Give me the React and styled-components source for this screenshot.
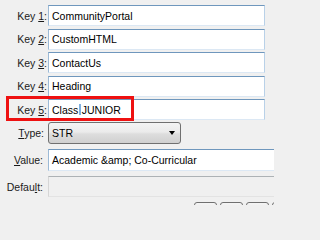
import styled, { createGlobalStyle } from 'styled-components';

const GlobalStyle = createGlobalStyle`
    html, body {
        margin: 0;
        padding: 0;
        background: #f0f0f0;
        overflow: hidden;
    }
    body {
        font-family: 'Liberation Sans', Tahoma, Arial, sans-serif;
        font-size: 10.5px;
        color: #1a1a1a;
    }
`

const keys = ['CommunityPortal', 'CustomHTML', 'ContactUs', 'Heading'];

function App() {
    return (
        <>
        <GlobalStyle />
        <Panel>
            <Form>
                {keys.map((value, i) => (
                    <Row key={value} $gap={i === 0 ? 0 : 2.5}>
                        <Label $pad={1}>Key <u>{i + 1}</u>:</Label>
                        <TextBox>{value}</TextBox>
                    </Row>
                ))}
                <Row $gap={2.5}>
                    <Label $pad={1}>Key <u>5</u>:</Label>
                    <TextBox>Class<Caret />JUNIOR</TextBox>
                    <Highlight />
                </Row>
                <Row $gap={2}>
                    <Label $pad={4}><u>T</u>ype:</Label>
                    <Select>
                        <span>STR</span>
                        <Arrow />
                    </Select>
                </Row>
                <Row $gap={5}>
                    <Label $pad={5}><u>V</u>alue:</Label>
                    <TextBox $wide $tall>Academic &amp;amp; Co-Curricular</TextBox>
                </Row>
                <Row $gap={5}>
                    <Label $pad={5}>Defau<u>l</u>t:</Label>
                    <TextBox $wide $disabled />
                </Row>
            </Form>
            <Buttons>
                <SmallButton />
                <SmallButton />
                <SmallButton />
                <SmallButton />
            </Buttons>
        </Panel>
        </>
    );
}

export default App;

const Panel = styled.div`
    width: 274px;
    height: 205px;
    padding-top: 5px;
    box-sizing: border-box;
    overflow: hidden;
`

const Form = styled.div`
    display: flex;
    flex-direction: column;
`

const Row = styled.div`
    position: relative;
    display: flex;
    align-items: center;
    margin-top: ${(p) => p.$gap}px;
`

const Label = styled.label`
    width: 48px;
    flex-shrink: 0;
    box-sizing: border-box;
    padding-right: ${(p) => p.$pad}px;
    text-align: right;
    white-space: nowrap;
    u {
        text-decoration-thickness: 1px;
        text-underline-offset: 1px;
    }
`

const TextBox = styled.div`
    width: ${(p) => (p.$wide ? '240px' : '217px')};
    height: ${(p) => (p.$tall ? '22px' : '21px')};
    flex-shrink: 0;
    box-sizing: border-box;
    display: flex;
    align-items: center;
    padding-left: 3px;
    background: ${(p) => (p.$disabled ? '#f0f0f0' : '#ffffff')};
    border: 1px solid;
    border-color: ${(p) => (p.$disabled
        ? '#adb2b5 #dadada #e3e3e3 #d6d6d6'
        : '#6f97bd #b9d1e8 #dce8f4 #9cbad6')};
    color: #000;
    white-space: nowrap;
`

const Caret = styled.span`
    display: inline-block;
    width: 1.5px;
    height: 11px;
    margin: 0 1px 0 1px;
    background: #7fb0e0;
`

const Highlight = styled.div`
    position: absolute;
    left: 6px;
    top: -3px;
    width: 128px;
    height: 25px;
    box-sizing: border-box;
    border: 3px solid #ee1111;
    pointer-events: none;
`

const Select = styled.div`
    width: 133px;
    height: 22px;
    box-sizing: border-box;
    display: flex;
    align-items: center;
    justify-content: space-between;
    padding: 0 5px 0 3px;
    border: 1px solid #707070;
    border-radius: 3px;
    background: linear-gradient(#f4f4f4 0%, #ebebeb 45%, #dddddd 55%, #d0d0d0 100%);
    color: #000;
`

const Arrow = styled.span`
    width: 0;
    height: 0;
    border-left: 3.5px solid transparent;
    border-right: 3.5px solid transparent;
    border-top: 4px solid #000;
`

const Buttons = styled.div`
    display: flex;
    gap: 3px;
    margin-top: 5px;
    padding-left: 194px;
`

const SmallButton = styled.div`
    width: 23px;
    height: 22px;
    flex-shrink: 0;
    box-sizing: border-box;
    border: 1px solid #707070;
    border-radius: 3px;
    background: linear-gradient(#f4f4f4, #e3e3e3);
`
